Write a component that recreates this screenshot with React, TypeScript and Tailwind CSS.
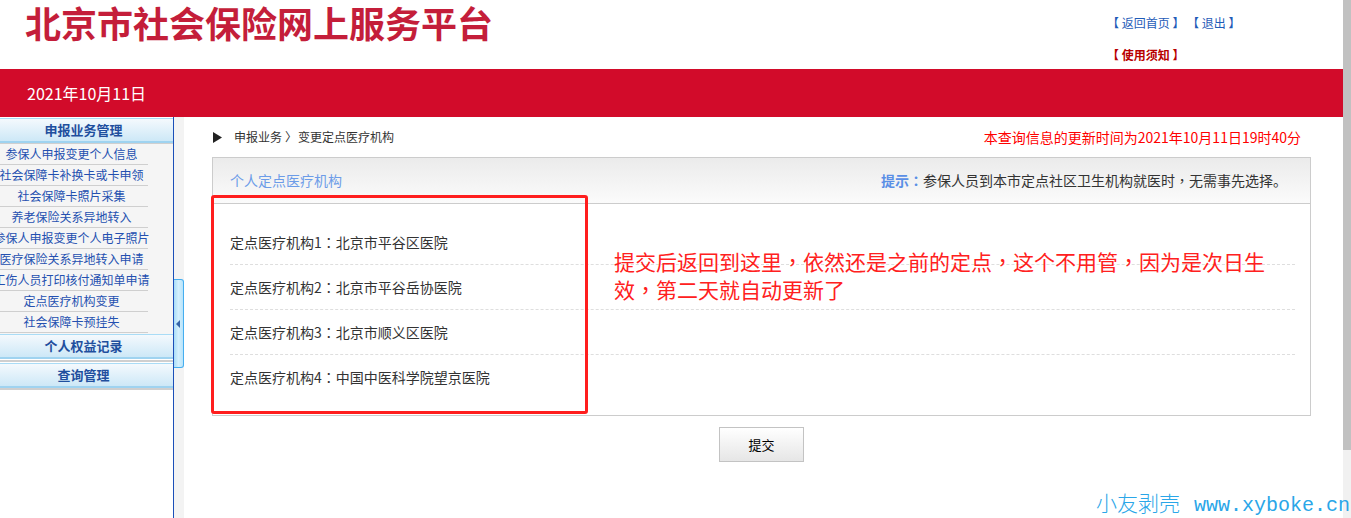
const menuItems = [
  "参保人申报变更个人信息",
  "社会保障卡补换卡或卡申领",
  "社会保障卡照片采集",
  "养老保险关系异地转入",
  "参保人申报变更个人电子照片",
  "医疗保险关系异地转入申请",
  "工伤人员打印核付通知单申请",
  "定点医疗机构变更",
  "社会保障卡预挂失",
];

const hospitals = [
  ["定点医疗机构1", "北京市平谷区医院"],
  ["定点医疗机构2", "北京市平谷岳协医院"],
  ["定点医疗机构3", "北京市顺义区医院"],
  ["定点医疗机构4", "中国中医科学院望京医院"],
];

// centred full-width punctuation, as the reference font draws it
function P({ c }: { c: string }) {
  return <span className="font-['Noto_Sans_CJK_TC',sans-serif]">{c}</span>;
}

function SideHeader({ title }: { title: string }) {
  return (
    <div className="flex h-[25px] items-center justify-center border-t border-b-2 border-t-[#a9dcf6] border-b-[#9fd3f0] bg-gradient-to-b from-[#f4f9fd] to-[#cde8f7] pr-[6px] text-[13px] font-bold text-[#1f4f9e]">
      {title}
    </div>
  );
}

export default function App() {
  return (
    <div className="relative flex h-[518px] w-[1351px] overflow-hidden bg-white font-['Noto_Sans_CJK_SC',sans-serif]">
      <div className="flex w-[1343px] flex-col">
        {/* top header */}
        <header className="flex h-[69px] justify-between">
          <h1 className="pl-[25px] pt-[1px] text-[36px] font-bold leading-[42px] text-[#c41e3a]">
            北京市社会保险网上服务平台
          </h1>
          <div className="w-[236px] pt-[14px] text-[12px] leading-[18px]">
            <div className="text-[#1f5cb8]">
              【 返回首页 】 【 退出 】
            </div>
            <div className="mt-[14px] font-bold text-[#b80000]">【 使用须知 】</div>
          </div>
        </header>

        {/* red banner */}
        <div className="flex h-[48px] items-center bg-[#d20b2a] pl-[27px] text-[16px] text-white">
          2021年10月11日
        </div>

        <div className="flex flex-1">
          {/* sidebar */}
          <aside className="w-[174px] overflow-hidden border-r border-[#1b4fb8] pt-[1px]">
            <SideHeader title="申报业务管理" />
            <div className="bg-[#f5f5f5]">
              <div className="h-px bg-[#cfcfcf]" />
              {menuItems.map((m) => (
                <div key={m} className="flex h-[21px] w-[148px] justify-center border-b border-[#cfcfcf] pr-[5px]">
                  <span className="whitespace-nowrap text-[12px] leading-[20px] text-[#2450b0]">{m}</span>
                </div>
              ))}
              <div className="h-px" />
            </div>
            <SideHeader title="个人权益记录" />
            <div className="mt-[1px] h-[2px] bg-[#cfcfcf]" />
            <div className="mt-[1px]">
              <SideHeader title="查询管理" />
            </div>
            <div className="h-[2px] bg-[#cfcfcf]" />
          </aside>

          {/* collapse strip */}
          <div className="w-[10px] bg-[#f3f3f3] pt-[162px]">
            <div className="flex h-[89px] items-center rounded-r-[3px] border border-l-0 border-[#45aef0] bg-gradient-to-r from-[#a9ddf8] via-[#d4f0fd] to-[#b8e3fa] pl-[2px]">
              <div className="h-0 w-0 border-y-[4px] border-r-[4px] border-y-transparent border-r-[#3565a8]" />
            </div>
          </div>

          {/* content */}
          <main className="flex-1 pl-[28px] pr-[32px]">
            <div className="mb-[10px] flex items-center justify-between pt-[10px] leading-[20px]">
              <div className="flex items-center text-[12px] text-[#333]">
                <svg width="10" height="11" viewBox="0 0 10 11" className="ml-[1px] mr-[11px]">
                  <path d="M0 0 L9 5.5 L0 11 Z" fill="#222" />
                </svg>
                <span>申报业务</span>
                <span className="ml-[3px] w-[12px]">〉</span>
                <span className="ml-[1px]">变更定点医疗机构</span>
              </div>
              <div className="pr-[10px] text-[14px] text-[#ff0000]">
                本查询信息的更新时间为2021年10月11日19时40分
              </div>
            </div>

            <section className="relative border border-[#cccccc]">
              <div className="flex h-[46px] items-center justify-between border-b border-[#cccccc] bg-gradient-to-b from-[#ebebeb] to-[#fbfbfb] pl-[17px] pr-[23px] text-[14px]">
                <span className="text-[#6c9ce8]">个人定点医疗机构</span>
                <span className="text-[#333]">
                  <span className="font-bold text-[#5a8fe6]">
                    提示<P c="：" />
                  </span>
                  参保人员到本市定点社区卫生机构就医时<P c="，" />无需事先选择。
                </span>
              </div>
              <div className="pb-[15px] pl-[17px] pr-[15px] pt-[16px]">
                {hospitals.map(([label, name], i) => (
                  <div
                    key={label}
                    className={
                      i < hospitals.length - 1
                        ? "flex h-[45px] items-center border-b border-dashed border-[#dedede] text-[14px] text-[#333]"
                        : "flex h-[45px] items-center text-[14px] text-[#333]"
                    }
                  >
                    <span>
                      {label}
                      <P c="：" />
                      {name}
                    </span>
                  </div>
                ))}
              </div>

              {/* annotation overlay */}
              <div className="absolute left-[-2px] top-[37px] h-[219px] w-[377px] rounded-[3px] border-[3px] border-[#ff1e1e]" />
              <div className="absolute left-[401px] top-[89px] whitespace-nowrap text-[21px] leading-[28px] text-[#ff2020]">
                提交后返回到这里<P c="，" />依然还是之前的定点<P c="，" />这个不用管<P c="，" />因为是次日生
                <br />
                效<P c="，" />第二天就自动更新了
              </div>
            </section>

            <div className="mt-[11px] flex justify-center">
              <button className="h-[35px] w-[85px] border border-[#c3c3c3] bg-gradient-to-b from-white to-[#e6e6e6] text-[13px] text-black">
                提交
              </button>
            </div>
          </main>
        </div>
      </div>

      {/* scrollbar */}
      <div className="flex w-[8px] flex-col bg-[#f1f1f1]">
        <div className="h-[450px] bg-[#c1c1c1]" />
      </div>

      {/* watermark */}
      <div className="absolute left-[1096px] top-[492px] flex items-baseline whitespace-nowrap leading-none text-[#2aa6e8]">
        <span className="text-[21px] font-light">小友剥壳</span>
        <span className="ml-[14px] font-['Liberation_Mono',monospace] text-[20px]">www.xyboke.cn</span>
      </div>
    </div>
  );
}
